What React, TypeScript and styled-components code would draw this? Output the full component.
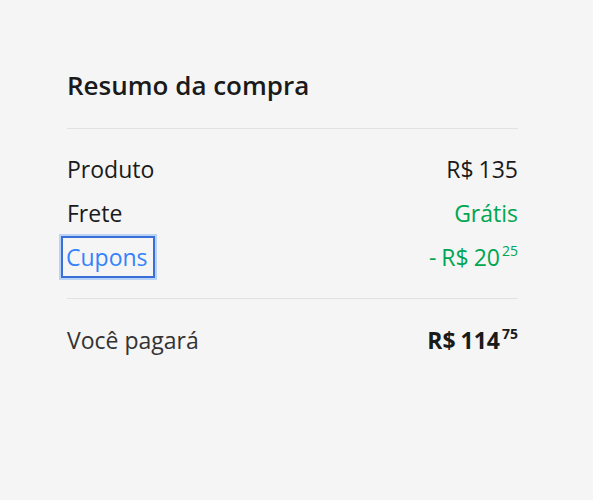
import React from "react";
import styled, { createGlobalStyle } from "styled-components";

const GlobalStyle = createGlobalStyle`
  html, body {
    margin: 0;
    padding: 0;
    background: #f5f5f5;
  }
  body {
    font-family: "Open Sans", "Liberation Sans", sans-serif;
    color: rgba(0, 0, 0, 0.9);
  }
`;

function Price({ whole, cents, prefix }: { whole: string; cents?: string; prefix?: string }) {
  return (
    <PriceWrap>
      {prefix}R$ {whole}
      {cents && <Cents>{cents}</Cents>}
    </PriceWrap>
  );
}

function App() {
  return (
    <Page>
      <GlobalStyle />
      <Summary>
        <Title>Resumo da compra</Title>
        <Divider />
        <Rows>
          <Row>
            <Label>Produto</Label>
            <Value>
              <Price whole="135" />
            </Value>
          </Row>
          <Row>
            <Label>Frete</Label>
            <Value $green>Grátis</Value>
          </Row>
          <Row>
            <CouponButton type="button">Cupons</CouponButton>
            <Value $green>
              <Price prefix="- " whole="20" cents="25" />
            </Value>
          </Row>
        </Rows>
        <Divider />
        <TotalRow>
          <TotalLabel>Você pagará</TotalLabel>
          <Value $bold>
            <Price whole="114" cents="75" />
          </Value>
        </TotalRow>
      </Summary>
    </Page>
  );
}

export default App;

const Page = styled.div`
  min-height: 500px;
  box-sizing: border-box;
  padding: 68px 75px 0 67px;
`;

const Summary = styled.div`
  width: 451px;
`;

const Title = styled.h2`
  margin: 0;
  font-size: 26px;
  font-weight: 600;
  line-height: 34px;
  color: #1a1a1a;
`;

const Divider = styled.hr`
  border: none;
  height: 1px;
  background: #e2e2e2;
  margin: 26px 0 0;
`;

const Rows = styled.div`
  display: flex;
  flex-direction: column;
  gap: 14px;
  padding-top: 25px;
`;

const Row = styled.div`
  display: flex;
  justify-content: space-between;
  align-items: center;
  height: 30px;
  font-size: 23px;
`;

const Label = styled.span`
  color: #1a1a1a;
`;

const CouponButton = styled.button`
  font: inherit;
  color: #3483fa;
  background: transparent;
  border: 2px solid #3a6fd8;
  box-shadow: 0 0 0 2px rgba(52, 131, 250, 0.3);
  padding: 4px 5px 4px 3px;
  margin-left: -6px;
  line-height: 30px;
  cursor: pointer;
`;

const Value = styled.span<{ $green?: boolean; $bold?: boolean }>`
  color: ${(p) => (p.$green ? "#00a650" : "#1a1a1a")};
  font-weight: ${(p) => (p.$bold ? 700 : 400)};
`;

const PriceWrap = styled.span`
  display: inline-flex;
  align-items: flex-start;
  word-spacing: -1px;
`;

const Cents = styled.span`
  font-size: 14px;
  line-height: 14px;
  margin-left: 2px;
  margin-top: 3px;
`;

const TotalRow = styled(Row)`
  margin-top: 26px;
`;

const TotalLabel = styled.span`
  color: #333;
`;
